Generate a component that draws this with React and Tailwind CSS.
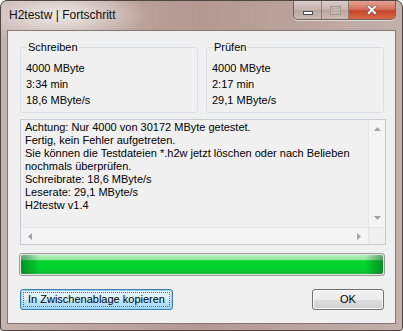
import React from "react";

const font = { fontFamily: '"Liberation Sans", Arial, sans-serif' };

function Arrow({ dir }) {
  const pts = {
    up: "0,4 3.5,0 7,4",
    down: "0,0 3.5,4 7,0",
    left: "4,0 0,3.5 4,7",
    right: "0,0 4,3.5 0,7",
  }[dir];
  const vertical = dir === "up" || dir === "down";
  return (
    <svg width={vertical ? 7 : 4} height={vertical ? 4 : 7} viewBox={vertical ? "0 0 7 4" : "0 0 4 7"}>
      <polygon points={pts} fill="#a3a3a3" />
    </svg>
  );
}

function Group({ title, lines }) {
  return (
    <div className="w-[178px] h-[66px] border border-[#d5dfe5] rounded-[3px] flex flex-col">
      <span className="-mt-[8px] ml-[6px] px-[1px] w-fit bg-[#f0f0f0] leading-[14px]">{title}</span>
      <div className="mt-[6px] pl-[5px] leading-[16px]">
        {lines.map((l) => (
          <div key={l}>{l}</div>
        ))}
      </div>
    </div>
  );
}

export default function App() {
  const log = [
    "Achtung: Nur 4000 von 30172 MByte getestet.",
    "Fertig, kein Fehler aufgetreten.",
    "Sie können die Testdateien *.h2w jetzt löschen oder nach Belieben",
    "nochmals überprüfen.",
    "Schreibrate: 18,6 MByte/s",
    "Leserate: 29,1 MByte/s",
    "H2testw v1.4",
  ];

  return (
    <div
      style={font}
      className="w-[403px] h-[331px] rounded-t-[7px] rounded-b-[3px] border border-[#4f4543] bg-[radial-gradient(ellipse_90px_30px_at_60px_14px,rgba(255,255,255,0.75),transparent),linear-gradient(90deg,#c6b2ac,#b39890_50%,#c2b0ab)] text-[11px] text-black flex flex-col overflow-hidden"
    >
      {/* title bar */}
      <div className="h-[29px] flex items-start">
        <span className="pl-[8px] pt-[7px] text-[12px] leading-[15px] text-[#111]">H2testw | Fortschritt</span>
        <div className="ml-auto mr-[6px] flex h-[19px] rounded-b-[5px] border border-t-0 border-[#6e625f] overflow-hidden shadow-[0_1px_0_rgba(255,255,255,0.6)]">
          <div className="w-[28px] flex items-center justify-center bg-[linear-gradient(#d9cdca,#c5b3ae_50%,#b9a5a0_51%,#cbbab5)] border-r border-[#8a7c78]">
            <div className="w-[10px] h-[4px] bg-white border border-[#4a4a55] mt-[5px]" />
          </div>
          <div className="w-[27px] flex items-center justify-center bg-[linear-gradient(#d9cdca,#c5b3ae_50%,#b9a5a0_51%,#cbbab5)] border-r border-[#8a7c78]">
            <div className="w-[11px] h-[9px] border border-[#a59591] bg-[#c8b8b4] flex items-center justify-center">
              <div className="w-[7px] h-[4px] border border-[#b7a7a3]" />
            </div>
          </div>
          <div className="w-[46px] flex items-center justify-center bg-[linear-gradient(#e6a493,#d2735d_45%,#c7442a_55%,#d86a48)]">
            <span className="text-white font-bold text-[14px] leading-none [text-shadow:0_0_1px_#333,0_0_1px_#333]">✕</span>
          </div>
        </div>
      </div>

      {/* client area */}
      <div className="mx-[6px] h-[294px] border border-[#85776f] bg-[#f0f0f0] flex flex-col">
        <div className="mt-[16px] ml-[12px] flex gap-[8px]">
          <Group title="Schreiben" lines={["4000 MByte", "3:34 min", "18,6 MByte/s"]} />
          <Group title="Prüfen" lines={["4000 MByte", "2:17 min", "29,1 MByte/s"]} />
        </div>

        {/* log box */}
        <div className="mt-[6px] ml-[12px] w-[366px] h-[126px] border border-[#c9cbd0] bg-[#f0f0f0] flex flex-col">
          <div className="flex flex-1 min-h-0">
            <div className="flex-1 pl-[4px] pt-[1px] leading-[13px] whitespace-nowrap overflow-hidden">
              {log.map((l) => (
                <div key={l}>{l}</div>
              ))}
            </div>
            <div className="w-[17px] border-l border-[#e6e6e6] bg-[#f4f4f4] flex flex-col items-center justify-between py-[7px]">
              <Arrow dir="up" />
              <Arrow dir="down" />
            </div>
          </div>
          <div className="h-[17px] flex border-t border-[#e6e6e6]">
            <div className="flex-1 bg-[#f4f4f4] flex items-center justify-between px-[7px]">
              <Arrow dir="left" />
              <Arrow dir="right" />
            </div>
            <div className="w-[17px] bg-[#f0f0f0] border-l border-[#e6e6e6]" />
          </div>
        </div>

        {/* progress bar */}
        <div className="mt-[8px] ml-[11px] w-[366px] h-[23px] rounded-[3px] border border-[#9c9c9c] p-[1px] bg-[#e6e6e6]">
          <div className="h-full rounded-[2px] bg-[linear-gradient(#b8f0bd,#8ee79a_25%,#06d22e_30%,#00d32c_70%,#1fbb3c)] relative overflow-hidden">
            <div className="absolute inset-0 bg-[linear-gradient(90deg,rgba(0,70,20,0.45),transparent_5%,transparent_95%,rgba(0,70,20,0.45))]" />
          </div>
        </div>

        {/* buttons */}
        <div className="mt-[13px] ml-[12px] mr-[11px] flex justify-between">
          <button className="w-[153px] h-[21px] rounded-[3px] border border-[#3c7fb1] bg-[linear-gradient(#eaf6fd,#d9f0fc_50%,#bee6fd_51%,#a7d9f5)] p-[2px] shadow-[inset_0_0_0_1px_#8ed2f7]">
            <div className="h-full border border-dotted border-[#4a6a80] flex items-center justify-center leading-none">
              In Zwischenablage kopieren
            </div>
          </button>
          <button className="w-[72px] h-[21px] rounded-[3px] border border-[#707070] bg-[linear-gradient(#f2f2f2,#ebebeb_50%,#dddddd_51%,#cfcfcf)] shadow-[inset_0_0_0_1px_#fcfcfc] flex items-center justify-center leading-none">
            OK
          </button>
        </div>
      </div>
    </div>
  );
}
